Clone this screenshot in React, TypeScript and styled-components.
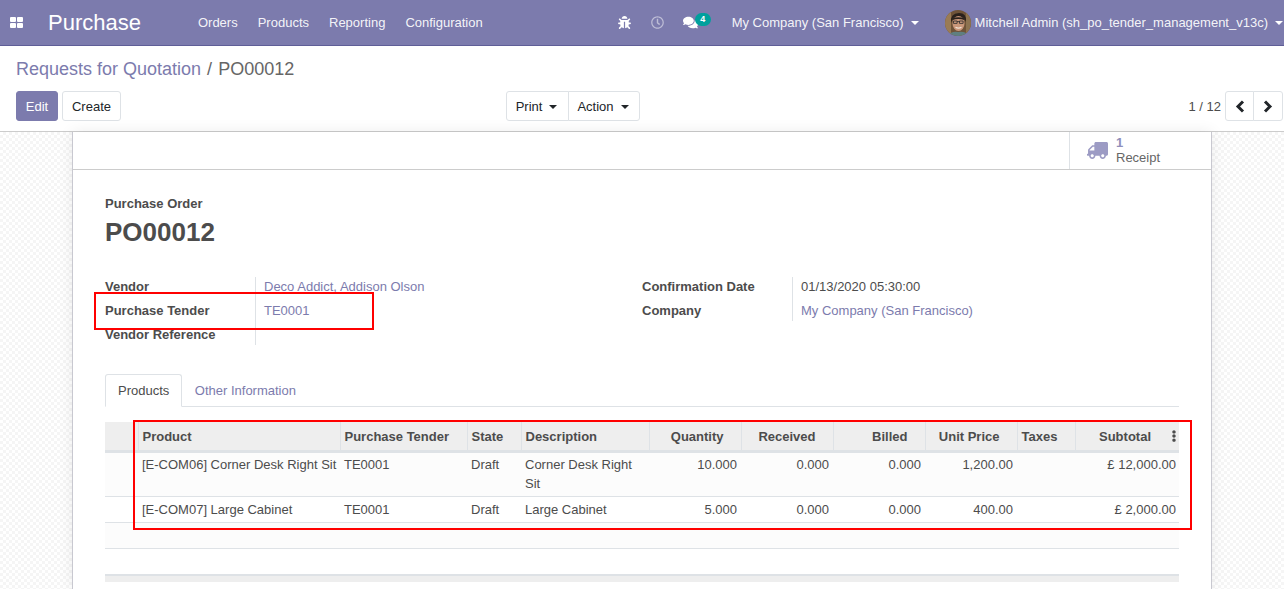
import React from "react";
import styled, { createGlobalStyle } from "styled-components";
import { FaBug, FaRegClock, FaComments, FaTruck, FaEllipsisV } from "react-icons/fa";

const Global = createGlobalStyle`
  html, body { margin: 0; padding: 0; height: 589px; overflow: hidden; background: #fff; }
  body { font-family: "Liberation Sans", Arial, sans-serif; font-size: 13px; line-height: 19.5px; color: #4c4c4c; }
  * { box-sizing: border-box; }
`;

const Page = styled.div`
  position: relative;
  width: 1284px;
  height: 589px;
  display: flex;
  flex-direction: column;
  overflow: hidden;
`;

const Navbar = styled.header`
  height: 46px;
  flex: none;
  background: #7c7bad;
  border-bottom: 1px solid #5f5e97;
  color: #fff;
  display: flex;
  align-items: center;
  padding: 0 1px 0 10px;
`;
const AppsIcon = styled.svg`
  width: 13px;
  height: 11px;
  fill: #fff;
  flex: none;
`;
const Brand = styled.div`
  font-size: 22px;
  margin-left: 25px;
  margin-right: 57px;
`;
const Menu = styled.nav`
  display: flex;
  gap: 20px;
  flex: 1;
`;
const NavItem = styled.span`
  color: rgba(255, 255, 255, 0.93);
  white-space: nowrap;
`;
const Systray = styled.div`
  display: flex;
  align-items: center;
`;
const TrayIcon = styled.span<{ $w: number; $dim?: boolean }>`
  width: ${(p) => p.$w}px;
  display: flex;
  justify-content: center;
  position: relative;
  font-size: 13px;
  color: ${(p) => (p.$dim ? "rgba(255,255,255,0.5)" : "#fff")};
`;
const Badge = styled.span`
  position: absolute;
  left: 21px;
  top: -2px;
  width: 16px;
  height: 13px;
  border-radius: 7px;
  background: #00a09d;
  color: #fff;
  font-size: 9px;
  font-weight: bold;
  line-height: 13px;
  text-align: center;
`;
const Caret = styled.span<{ $dark?: boolean }>`
  display: inline-block;
  width: 0;
  height: 0;
  border-top: 4px solid ${(p) => (p.$dark ? "#212529" : "#fff")};
  border-left: 4px solid transparent;
  border-right: 4px solid transparent;
  vertical-align: ${(p) => (p.$dark ? "3px" : "2px")};
  margin-left: 7px;
`;
const Company = styled.span`
  margin-left: 25px;
  margin-right: 26px;
  white-space: nowrap;
  color: rgba(255, 255, 255, 0.93);
`;
const Avatar = styled.svg`
  width: 26px;
  height: 26px;
  border-radius: 50%;
  flex: none;
  margin-right: 4px;
`;

const ControlPanel = styled.section`
  height: 86px;
  flex: none;
  border-bottom: 1px solid #cccccc;
  padding: 12px 1px 0 16px;
`;
const Breadcrumb = styled.div`
  font-size: 18px;
  line-height: 22px;
  height: 33px;
  display: flex;
  color: #666;
`;
const Crumb = styled.span`
  color: #7c7bad;
`;
const Sep = styled.span`
  margin: 0 6px;
`;
const Toolbar = styled.div`
  display: grid;
  grid-template-columns: 490px 1fr 490px;
  align-items: center;
`;
const Side = styled.div<{ $end?: boolean }>`
  display: flex;
  align-items: center;
  gap: 4px;
  justify-content: ${(p) => (p.$end ? "flex-end" : "flex-start")};
`;
const Center = styled.div`
  display: flex;
  justify-content: flex-start;
`;
const Btn = styled.button<{ $primary?: boolean; $w: number; $joined?: "l" | "r"; $pr?: number }>`
  font: inherit;
  width: ${(p) => p.$w}px;
  height: 30px;
  padding: 1px ${(p) => p.$pr ?? 0}px 0 0;
  color: ${(p) => (p.$primary ? "#fff" : "#212529")};
  background: ${(p) => (p.$primary ? "#7c7bad" : "#fff")};
  border: 1px solid ${(p) => (p.$primary ? "#7c7bad" : "#dee2e6")};
  border-radius: ${(p) => (p.$joined === "l" ? "3px 0 0 3px" : p.$joined === "r" ? "0 3px 3px 0" : "3px")};
  margin-left: ${(p) => (p.$joined === "r" ? "-1px" : "0")};
  display: inline-flex;
  align-items: center;
  justify-content: center;
`;
const Group = styled.div`
  display: flex;
`;
const PagerText = styled.span`
  margin-top: 1px;
`;
const Chevron = styled.svg`
  width: 10px;
  height: 13px;
  fill: none;
  stroke: #212529;
  stroke-width: 3px;
`;

const Content = styled.main`
  flex: 1;
  min-height: 0;
  padding: 0 72px;
  background-color: #fff;
  background-image: conic-gradient(#f5f5f5 25%, #fff 0 50%, #f5f5f5 0 75%, #fff 0);
  background-size: 6px 6px;
`;
const Sheet = styled.div`
  width: 1140px;
  height: 100%;
  background: #fff;
  border-left: 1px solid #c8c8d0;
  border-right: 1px solid #c8c8d0;
  box-shadow: 0 0 14px rgba(0, 0, 0, 0.08);
`;
const StatBar = styled.div`
  height: 38px;
  border-bottom: 1px solid #ccc;
  display: flex;
  justify-content: flex-end;
`;
const StatButton = styled.div`
  width: 142px;
  border-left: 1px solid #dee2e6;
  display: flex;
  align-items: center;
  padding-left: 17px;
  gap: 8px;
`;
const TruckIcon = styled(FaTruck)`
  font-size: 21px;
  color: #9c9bc4;
  transform: scaleX(-1);
`;
const StatText = styled.div`
  line-height: 15px;
  font-size: 13px;
  color: #666;
  margin-top: -1px;
`;
const StatNum = styled.div`
  color: #8f8ebb;
  font-weight: bold;
`;
const Body = styled.div`
  padding: 24px 32px 0 32px;
`;
const FormLabel = styled.div`
  font-weight: bold;
  line-height: 20px;
`;
const Title = styled.h1`
  margin: 1px 0 28px;
  font-size: 26px;
  line-height: 34px;
  font-weight: bold;
  color: #4c4c4c;
`;
const Groups = styled.div`
  display: grid;
  grid-template-columns: 537px 1fr;
`;
const Fields = styled.div`
  display: grid;
  grid-template-columns: 150px 1fr;
  align-self: start;
`;
const FieldLabel = styled.div`
  font-weight: bold;
  height: 24px;
  line-height: 20px;
`;
const FieldValue = styled.div<{ $link?: boolean; $last?: boolean }>`
  height: ${(p) => (p.$last ? 20 : 24)}px;
  line-height: 20px;
  padding-left: 8px;
  border-left: 1px solid #dee2e6;
  color: ${(p) => (p.$link ? "#7c7bad" : "#4c4c4c")};
`;
const Tabs = styled.div`
  margin-top: 25px;
  height: 33px;
  border-bottom: 1px solid #dee2e6;
  display: flex;
`;
const Tab = styled.div<{ $active?: boolean }>`
  height: 33px;
  padding: 6px 11.5px 6px 12px;
  border: 1px solid ${(p) => (p.$active ? "#dee2e6" : "transparent")};
  border-bottom-color: ${(p) => (p.$active ? "#fff" : "transparent")};
  border-radius: 3px 3px 0 0;
  color: ${(p) => (p.$active ? "#4c4c4c" : "#7c7bad")};
`;
const Table = styled.table`
  margin-top: 15px;
  width: 1074px;
  table-layout: fixed;
  border-collapse: collapse;
`;
const Col = styled.col<{ $w: number }>`
  width: ${(p) => p.$w}px;
`;
const Th = styled.th<{ $right?: boolean }>`
  height: 29px;
  padding: 2px 4px 0;
  background: #eeeeee;
  border-left: 1px solid #dee2e6;
  border-bottom: 3px solid #dee2e6;
  font-weight: bold;
  text-align: ${(p) => (p.$right ? "right" : "left")};
  white-space: nowrap;
  position: relative;
  &:first-child { border-left: 0; }
`;
const ThPad = styled.span<{ $pr: number }>`
  padding-right: ${(p) => p.$pr}px;
`;
const Kebab = styled.span`
  position: absolute;
  right: -1px;
  top: 8px;
  font-size: 12px;
  line-height: 12px;
  color: #4c4c4c;
`;
const Tr = styled.tr<{ $alt?: boolean; $h: number }>`
  height: ${(p) => p.$h}px;
  background: ${(p) => (p.$alt ? "#fff" : "#fcfcfc")};
  border-bottom: 1px solid #dee2e6;
`;
const Td = styled.td<{ $right?: boolean; $pt: number; $nowrap?: boolean }>`
  padding: ${(p) => p.$pt}px 4px 2px;
  vertical-align: top;
  text-align: ${(p) => (p.$right ? "right" : "left")};
  white-space: ${(p) => (p.$nowrap ? "nowrap" : "normal")};
  &:last-child { padding-right: 3px; }
`;
const FootBar = styled.div`
  height: 7px;
  width: 1074px;
  background: #eeeeee;
  border-top: 1px solid #dee2e6;
`;
const Highlight = styled.div`
  position: absolute;
  border: 2px solid #ff0000;
  pointer-events: none;
`;
const TenderBox = styled(Highlight)`
  left: 94px;
  top: 292px;
  width: 280px;
  height: 38px;
`;
const TableBox = styled(Highlight)`
  left: 133px;
  top: 420px;
  width: 1059px;
  height: 110px;
`;

const cols = [33, 202, 127, 54, 128, 92, 92, 92, 92, 58, 104];
const heads: [string, boolean, number][] = [
  ["", false, 0],
  ["Product", false, 0],
  ["Purchase Tender", false, 0],
  ["State", false, 0],
  ["Description", false, 0],
  ["Quantity", true, 13],
  ["Received", true, 13],
  ["Billed", true, 13],
  ["Unit Price", true, 13],
  ["Taxes", false, 0],
  ["Subtotal", true, 24],
];
const rows = [
  { h: 44, pt: 2, c: ["[E-COM06] Corner Desk Right Sit", "TE0001", "Draft", "Corner Desk Right Sit", "10.000", "0.000", "0.000", "1,200.00", "", "£ 12,000.00"] },
  { h: 26, pt: 3, c: ["[E-COM07] Large Cabinet", "TE0001", "Draft", "Large Cabinet", "5.000", "0.000", "0.000", "400.00", "", "£ 2,000.00"] },
];

export default function App() {
  return (
    <Page>
      <Global />
      <Navbar>
        <AppsIcon viewBox="0 0 13 11">
          <rect x="0" y="0" width="6" height="5" rx="1" />
          <rect x="7" y="0" width="6" height="5" rx="1" />
          <rect x="0" y="6" width="6" height="5" rx="1" />
          <rect x="7" y="6" width="6" height="5" rx="1" />
        </AppsIcon>
        <Brand>Purchase</Brand>
        <Menu>
          <NavItem>Orders</NavItem>
          <NavItem>Products</NavItem>
          <NavItem>Reporting</NavItem>
          <NavItem>Configuration</NavItem>
        </Menu>
        <Systray>
          <TrayIcon $w={33}><FaBug /></TrayIcon>
          <TrayIcon $w={33} $dim><FaRegClock /></TrayIcon>
          <TrayIcon $w={33}><FaComments size={15} /><Badge>4</Badge></TrayIcon>
          <Company>My Company (San Francisco)<Caret /></Company>
          <Avatar viewBox="0 0 26 26">
            <rect width="26" height="26" fill="#6f5338" />
            <rect x="0" y="0" width="6" height="26" fill="#9a7b55" />
            <rect x="21" y="0" width="5" height="26" fill="#8d7350" />
            <path d="M6 13 Q5 3 14 3 Q22 3 21 12 L19 8 Q13 6 8 8 Z" fill="#2a211c" />
            <ellipse cx="13.5" cy="13.5" rx="6" ry="7.5" fill="#c9977a" />
            <path d="M7 8.5 Q13 6 20 8.5 L19.5 10 Q13 8 7.5 10 Z" fill="#2a211c" />
            <path d="M8.5 11 h3.6 v2.4 h-3.6 z M14.5 11 h3.6 v2.4 h-3.6 z M12.1 11.6 h2.4" fill="none" stroke="#2b2b2b" strokeWidth="0.8" />
            <path d="M10.5 17.2 Q13.5 19 16.5 17.2" fill="none" stroke="#f1e2d6" strokeWidth="1.1" />
            <path d="M3 26 Q6 21 13 22 Q21 21 24 26 Z" fill="#5f7f80" />
          </Avatar>
          <NavItem>Mitchell Admin (sh_po_tender_management_v13c)<Caret /></NavItem>
        </Systray>
      </Navbar>
      <ControlPanel>
        <Breadcrumb>
          <Crumb>Requests for Quotation</Crumb>
          <Sep>/</Sep>
          <span>PO00012</span>
        </Breadcrumb>
        <Toolbar>
          <Side>
            <Btn $primary $w={42}>Edit</Btn>
            <Btn $w={59}>Create</Btn>
          </Side>
          <Center>
            <Group>
              <Btn $w={63} $pr={2} $joined="l">Print<Caret $dark /></Btn>
              <Btn $w={72} $pr={2} $joined="r">Action<Caret $dark /></Btn>
            </Group>
          </Center>
          <Side $end>
            <PagerText>1 / 12</PagerText>
            <Group>
              <Btn $w={29} $joined="l">
                <Chevron viewBox="0 0 10 13"><path d="M8 1.5 L3 6.5 L8 11.5" /></Chevron>
              </Btn>
              <Btn $w={30} $joined="r">
                <Chevron viewBox="0 0 10 13"><path d="M2 1.5 L7 6.5 L2 11.5" /></Chevron>
              </Btn>
            </Group>
          </Side>
        </Toolbar>
      </ControlPanel>
      <Content>
        <Sheet>
          <StatBar>
            <StatButton>
              <TruckIcon />
              <StatText>
                <StatNum>1</StatNum>
                Receipt
              </StatText>
            </StatButton>
          </StatBar>
          <Body>
            <FormLabel>Purchase Order</FormLabel>
            <Title>PO00012</Title>
            <Groups>
              <Fields>
                <FieldLabel>Vendor</FieldLabel>
                <FieldValue $link>Deco Addict, Addison Olson</FieldValue>
                <FieldLabel>Purchase Tender</FieldLabel>
                <FieldValue $link>TE0001</FieldValue>
                <FieldLabel>Vendor Reference</FieldLabel>
                <FieldValue $last />
              </Fields>
              <Fields>
                <FieldLabel>Confirmation Date</FieldLabel>
                <FieldValue>01/13/2020 05:30:00</FieldValue>
                <FieldLabel>Company</FieldLabel>
                <FieldValue $link $last>My Company (San Francisco)</FieldValue>
              </Fields>
            </Groups>
            <Tabs>
              <Tab $active>Products</Tab>
              <Tab>Other Information</Tab>
            </Tabs>
            <Table>
              <colgroup>
                {cols.map((w, i) => <Col key={i} $w={w} />)}
              </colgroup>
              <thead>
                <tr>
                  {heads.map(([t, r, pr], i) => (
                    <Th key={i} $right={r}>
                      <ThPad $pr={pr}>{t}</ThPad>
                      {t === "Subtotal" && <Kebab><FaEllipsisV /></Kebab>}
                    </Th>
                  ))}
                </tr>
              </thead>
              <tbody>
                {rows.map((r, i) => (
                  <Tr key={i} $h={r.h} $alt={i === 1}>
                    <Td $pt={r.pt} />
                    {r.c.map((c, j) => (
                      <Td key={j} $pt={r.pt} $right={j >= 4} $nowrap={j === 0}>{c}</Td>
                    ))}
                  </Tr>
                ))}
                <Tr $h={26}><Td $pt={2} colSpan={11} /></Tr>
                <Tr $h={26} $alt><Td $pt={2} colSpan={11} /></Tr>
              </tbody>
            </Table>
            <FootBar />
          </Body>
        </Sheet>
      </Content>
      <TenderBox />
      <TableBox />
    </Page>
  );
}
